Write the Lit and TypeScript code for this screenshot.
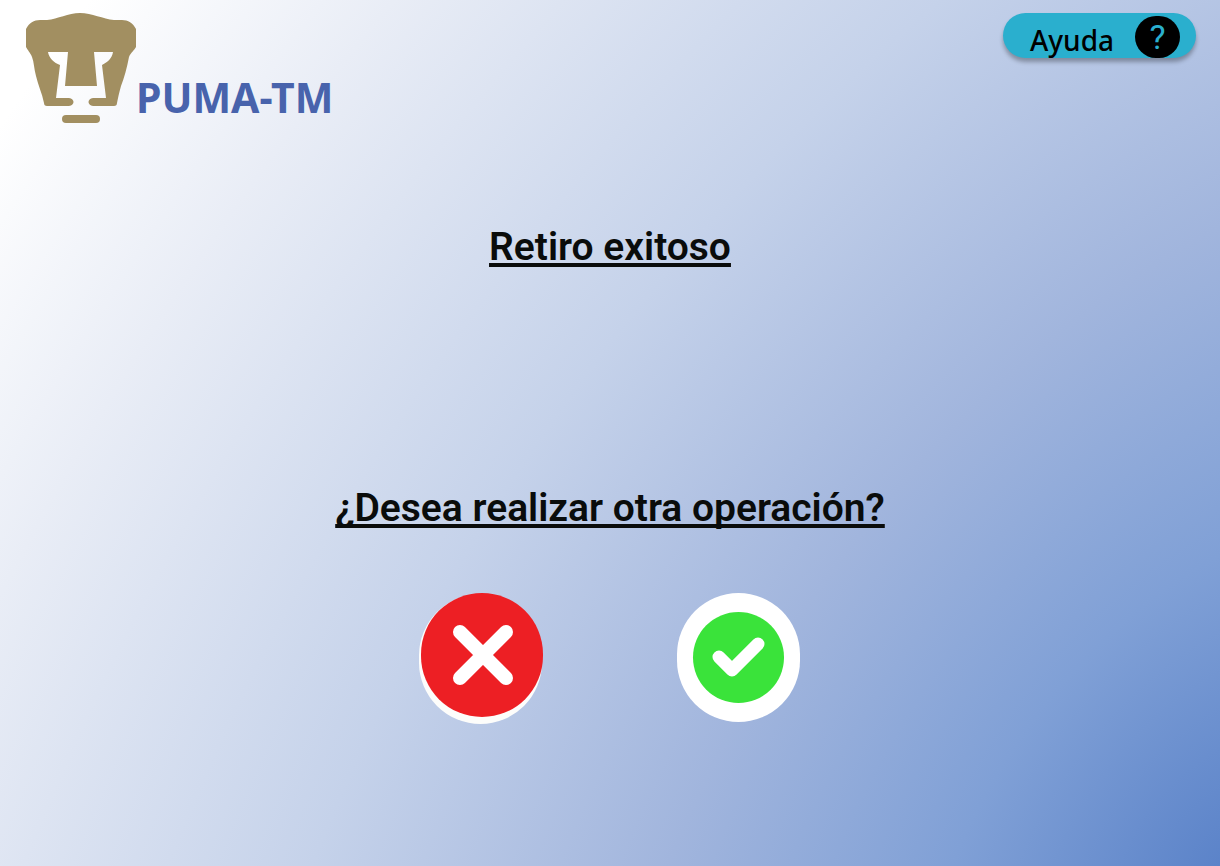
import { LitElement, html, css } from "lit";
import { customElement } from "lit/decorators.js";

@customElement("app-root")
export class AppRoot extends LitElement {
  static styles = css`
    :host {
      display: block;
      font-family: Roboto, "Noto Sans", sans-serif;
      color: #0a0c0b;
    }
    * {
      box-sizing: border-box;
    }
    .screen {
      position: relative;
      isolation: isolate;
      min-height: 100vh;
      display: flex;
      flex-direction: column;
    }
    .backdrop {
      position: absolute;
      inset: 0;
      z-index: -1;
      width: 100%;
      height: 100%;
      display: block;
    }
    .top {
      display: flex;
      justify-content: space-between;
      align-items: flex-start;
      padding: 13px 24px 0 26px;
    }
    .brand {
      display: flex;
      align-items: flex-end;
      color: #4863ac;
      text-decoration: none;
      font: 700 41px/54px "Noto Sans", sans-serif;
    }
    .puma {
      width: 110px;
      height: 111px;
      display: block;
    }
    .help {
      display: flex;
      align-items: center;
      justify-content: space-between;
      width: 193px;
      height: 45px;
      padding: 2px 16px 0 27px;
      border: 0;
      border-radius: 24px;
      background: #2aafce;
      box-shadow: 0 4px 4px rgba(0, 0, 0, 0.3);
      color: #000;
      font: 500 28px/40px "Noto Sans", sans-serif;
      cursor: pointer;
    }
    .label {
      padding-top: 6px;
    }
    .mark {
      display: grid;
      place-items: center;
      width: 45px;
      height: 42px;
      border-radius: 21px;
      background: #000;
      color: #2aafce;
      font: 400 34px/42px Roboto, sans-serif;
    }
    .content {
      display: flex;
      flex-direction: column;
      align-items: center;
      padding: 93px 24px 40px;
    }
    .title {
      margin: 0;
      font: 600 39px/60px Roboto, sans-serif;
      text-align: center;
      text-decoration: underline;
      text-decoration-thickness: 4px;
      text-underline-offset: 3px;
      text-decoration-skip-ink: none;
    }
    .question {
      margin-top: 201px;
    }
    .actions {
      display: flex;
      gap: 132px;
      margin-top: 54px;
    }
    .action {
      padding: 0;
      border: 0;
      background: none;
      cursor: pointer;
    }
    .action svg {
      display: block;
      width: 125px;
      height: 133px;
    }
  `;

  render() {
    return html`
      <div class="screen">
        <svg class="backdrop" viewBox="0 0 1220 866" preserveAspectRatio="none" aria-hidden="true">
          <defs>
            <radialGradient id="glow" gradientUnits="userSpaceOnUse" cx="0" cy="0" r="1"
              gradientTransform="translate(1220 866) rotate(-54) scale(2498 1499)">
              <stop offset="0" stop-color="#5b83c9" />
              <stop offset="0.158" stop-color="#80a0d6" />
              <stop offset="0.325" stop-color="#a1b5dd" />
              <stop offset="0.535" stop-color="#c5d2ea" />
              <stop offset="0.79" stop-color="#e9edf6" />
              <stop offset="0.95" stop-color="#ffffff" />
            </radialGradient>
          </defs>
          <rect width="1220" height="866" fill="url(#glow)" />
        </svg>
        <header class="top">
          <a class="brand" href="#">
            <svg class="puma" viewBox="0 0 110 111" aria-hidden="true">
              <path fill="#a28f61" fill-rule="evenodd" d="M0 16C3 10 8 7 14 7H21C32 6 42 0 54 0S77 6 88 7H96C102 7 107 10 110 16V34C108 38 105 39 103 44C101 55 98 65 95 73C93 80 92 85 91 90C91 92 90 93 88 93H67C61 92 61 86 67 85H80L76 52C82 49 86 45 87 39H68L71 73H39L42 39H22C23 45 28 50 34 52L30 85H43C49 86 49 92 43 93H21C19 93 18 92 18 90C16 80 12 72 10 63C8 56 8 49 6 44C4 39 2 38 0 34Z" />
              <rect x="36" y="102" width="38" height="8" rx="4" fill="#a28f61" />
            </svg>
            <span>PUMA-TM</span>
          </a>
          <button class="help" type="button">
            <span class="label">Ayuda</span>
            <span class="mark" aria-hidden="true">?</span>
          </button>
        </header>
        <main class="content">
          <h1 class="title">Retiro exitoso</h1>
          <h2 class="title question">¿Desea realizar otra operación?</h2>
          <div class="actions">
            <button class="action" type="button" aria-label="No">
              <svg viewBox="0 0 125 133" aria-hidden="true">
                <rect x="0" y="2" width="123" height="130" rx="61.5" fill="#fdfdfb" />
                <rect x="2" y="1" width="122" height="124" rx="61" fill="#ed1f24" />
                <path d="M41 40L87 86M87 40L41 86" stroke="#fff" stroke-width="14" stroke-linecap="round" />
              </svg>
            </button>
            <button class="action" type="button" aria-label="Sí">
              <svg viewBox="0 0 125 133" aria-hidden="true">
                <rect x="1" y="1" width="123" height="129" rx="61.5" fill="#fff" />
                <circle cx="62.5" cy="65.5" r="45.5" fill="#3ae33a" />
                <path d="M43 65L56 78L82 52" fill="none" stroke="#fff" stroke-width="13" stroke-linecap="round" stroke-linejoin="round" />
              </svg>
            </button>
          </div>
        </main>
      </div>
    `;
  }
}
